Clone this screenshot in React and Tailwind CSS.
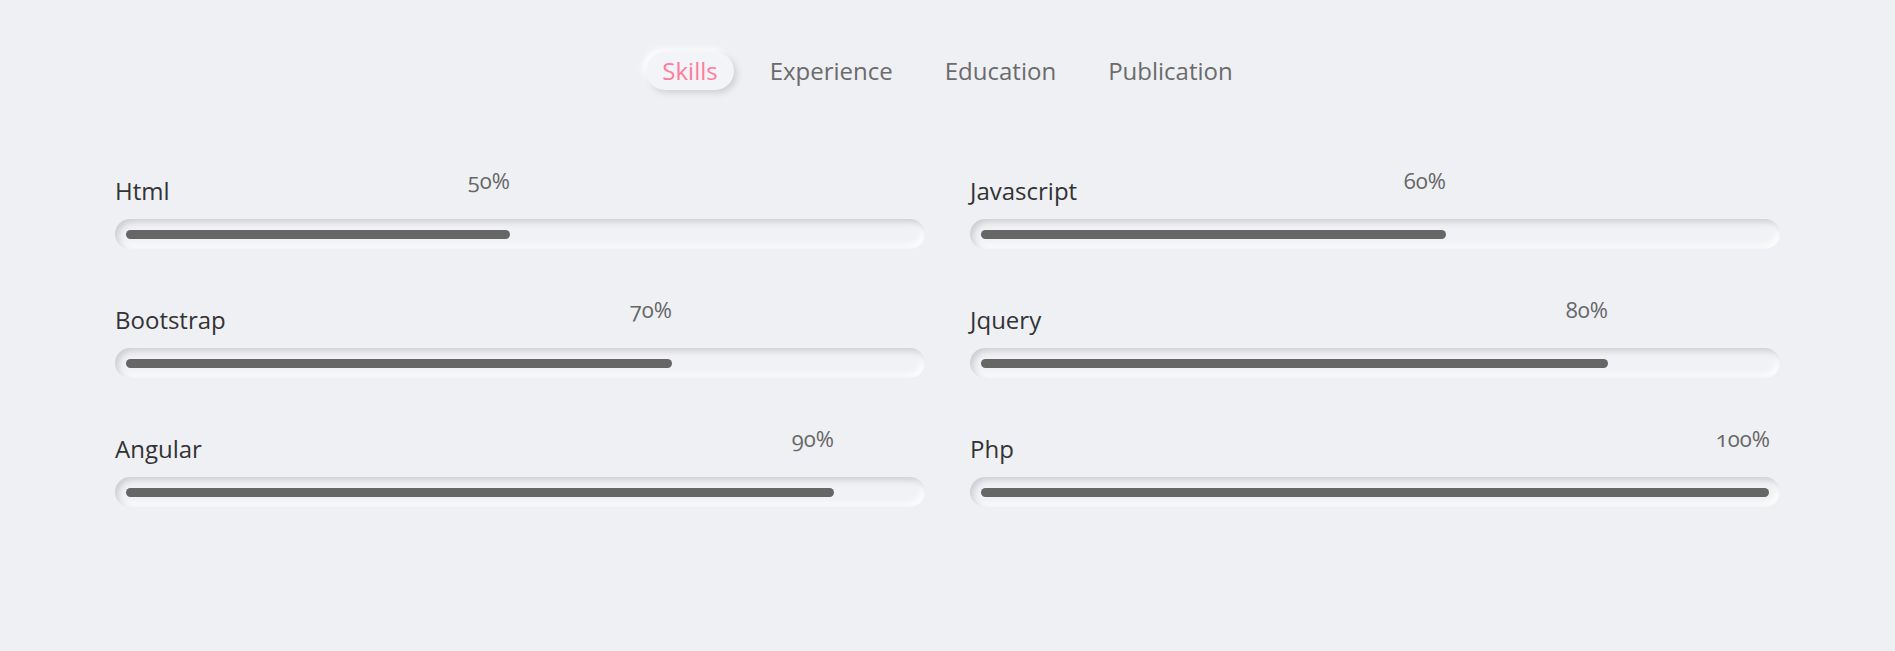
import React from "react";

const skills = [
  { name: "Html", p: 50 },
  { name: "Javascript", p: 60 },
  { name: "Bootstrap", p: 70 },
  { name: "Jquery", p: 80 },
  { name: "Angular", p: 90 },
  { name: "Php", p: 100 },
];

const tabs = ["Skills", "Experience", "Education", "Publication"];

function Skill({ name, p }) {
  return (
    <div className="relative">
      <div
        className="absolute left-[11px] top-[-9px] text-right text-[22px] leading-[30px] font-normal text-[#666666] [font-variant-numeric:oldstyle-nums]"
        style={{ width: `calc(${p}% - 21px)` }}
      >
        {p}%
      </div>
      <div className="text-[24px] leading-[33px] font-normal text-[#333333]">{name}</div>
      <div className="mt-3 h-[30px] rounded-full bg-[#f1f2f5] shadow-[inset_3px_3px_6px_#cbccd0,inset_-3px_-3px_6px_#ffffff] flex items-center px-[11px]">
        <div
          className="h-[9px] rounded-full bg-[#666666]"
          style={{ width: `calc(${p}% + ${(p / 100) * 22 - 21}px)` }}
        />
      </div>
    </div>
  );
}

export default function App() {
  return (
    <div
      className="min-h-[651px] w-full bg-[#eff0f4] pt-[52px]"
      style={{ fontFamily: '"Open Sans", "Liberation Sans", sans-serif' }}
    >
      <nav className="flex justify-center gap-5">
        {tabs.map((t, i) =>
          i === 0 ? (
            <div
              key={t}
              className="h-[38px] flex items-center px-4 rounded-full bg-[#f3f4f7] shadow-[3px_3px_6px_#cfd0d4,-3px_-3px_6px_#ffffff] text-[24px] font-normal text-[#ff7c9c]"
            >
              {t}
            </div>
          ) : (
            <div
              key={t}
              className="h-[38px] flex items-center px-4 text-[24px] font-normal text-[#6b6b6b]"
            >
              {t}
            </div>
          )
        )}
      </nav>
      <div className="mt-[84px] px-[115px] grid grid-cols-2 gap-x-[45px] gap-y-[54px]">
        {skills.map((s) => (
          <Skill key={s.name} {...s} />
        ))}
      </div>
    </div>
  );
}
